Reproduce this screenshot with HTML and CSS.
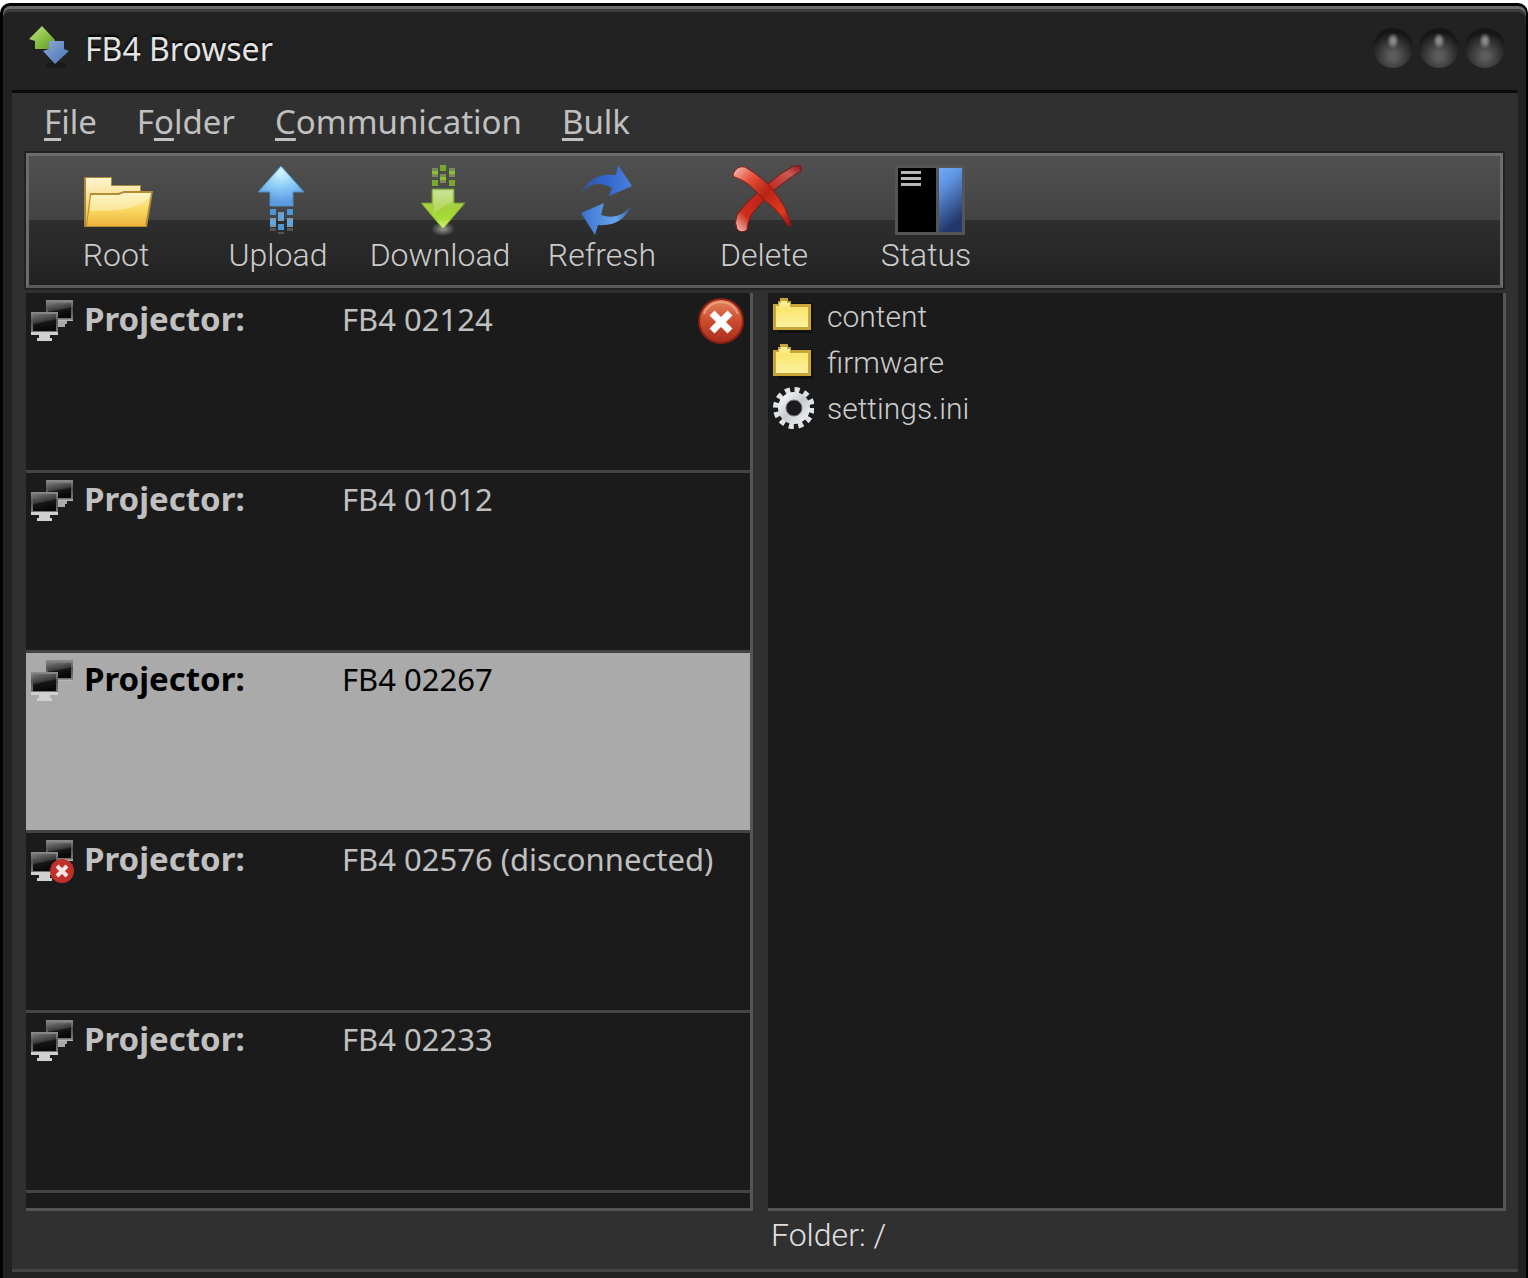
FILE: index.html
```html
<!DOCTYPE html>
<html lang="en">
<head>
    <meta charset="UTF-8">
    <title>FB4 Browser</title>
    <link rel="stylesheet" href="styles.css">
</head>
<body>
    <!-- shared gradients and symbols -->
    <svg class="defs" width="0" height="0" aria-hidden="true">
        <defs>
            <linearGradient id="screen" x1="0" y1="0" x2="0.3" y2="1">
                <stop offset="0" stop-color="#777"/>
                <stop offset="0.5" stop-color="#3c3c3c"/>
                <stop offset="0.6" stop-color="#161616"/>
                <stop offset="1" stop-color="#080808"/>
            </linearGradient>
            <linearGradient id="bezel" x1="0" y1="0" x2="0" y2="1">
                <stop offset="0" stop-color="#8c8c8c"/>
                <stop offset="0.4" stop-color="#555"/>
                <stop offset="0.9" stop-color="#777"/>
                <stop offset="1" stop-color="#ccc"/>
            </linearGradient>
            <linearGradient id="smallFolder" x1="0" y1="0" x2="0" y2="1">
                <stop offset="0" stop-color="#fdf3a8"/>
                <stop offset="0.3" stop-color="#fae56e"/>
                <stop offset="1" stop-color="#fcf3a0"/>
            </linearGradient>
            <linearGradient id="redBall" x1="0" y1="0" x2="0" y2="1">
                <stop offset="0" stop-color="#e58560"/>
                <stop offset="0.5" stop-color="#cc4c2c"/>
                <stop offset="1" stop-color="#a82c1c"/>
            </linearGradient>
        </defs>
        <symbol id="monitors" viewBox="0 0 48 48">
            <rect x="17" y="4" width="27" height="21" fill="url(#bezel)"/>
            <rect x="19" y="7" width="23" height="15" fill="url(#screen)"/>
            <path d="M28 25h10v3h-2v3h-8z" fill="#aaa"/>
            <rect x="2" y="16" width="27" height="23" fill="url(#bezel)"/>
            <rect x="4" y="18" width="23" height="17" fill="url(#screen)"/>
            <path d="M2 36h27v3h-8v3h2v3h-15v-3h2v-3h-8z" fill="#d0d0d0"/>
        </symbol>
        <symbol id="folder" viewBox="0 0 42 46">
            <path d="M6 10h35v30h-35z" fill="#111"/>
            <path d="M1 37v-26h5v-3h2v-3h8v3h3v3h20v26z" fill="#c9a437"/>
            <path d="M4 34v-21h3v-3h2v-2h6v2h3v4h18v20z" fill="url(#smallFolder)"/>
        </symbol>
    </svg>

    <div class="window">
        <header class="title-bar">
            <svg class="app-icon" viewBox="0 0 42 48" aria-hidden="true">
                <defs>
                    <linearGradient id="green" x1="0" y1="0" x2="1" y2="1">
                        <stop offset="0" stop-color="#c6e48c"/>
                        <stop offset="0.5" stop-color="#8cc34a"/>
                        <stop offset="1" stop-color="#5f9a22"/>
                    </linearGradient>
                    <linearGradient id="blue" x1="0" y1="0" x2="1" y2="1">
                        <stop offset="0" stop-color="#8fa9d6"/>
                        <stop offset="1" stop-color="#4672b4"/>
                    </linearGradient>
                </defs>
                <ellipse cx="27" cy="41" rx="10" ry="3" fill="#181818"/>
                <path d="M13 2L26 16V25H6V17L0 15z" fill="url(#green)"/>
                <path d="M20 17H35V25L40 27L26 40L14 27L20 25z" fill="url(#blue)"/>
            </svg>
            <h1 class="title">FB4 Browser</h1>
            <div class="window-buttons">
                <button class="window-button" aria-label="Minimize"></button>
                <button class="window-button" aria-label="Maximize"></button>
                <button class="window-button" aria-label="Close"></button>
            </div>
        </header>

        <div class="content">
            <nav class="menu">
                <button class="menu-item"><u>F</u>ile</button>
                <button class="menu-item">F<u>o</u>lder</button>
                <button class="menu-item"><u>C</u>ommunication</button>
                <button class="menu-item"><u>B</u>ulk</button>
            </nav>

            <div class="toolbar">
                <button class="tool">
                    <svg class="tool-icon" viewBox="0 0 72 72" aria-hidden="true">
                        <defs>
                            <linearGradient id="folderBack" x1="0" y1="0" x2="0" y2="1">
                                <stop offset="0" stop-color="#fff6cf"/>
                                <stop offset="1" stop-color="#f0bb45"/>
                            </linearGradient>
                            <linearGradient id="folderFront" x1="0" y1="0" x2="0" y2="1">
                                <stop offset="0" stop-color="#fff0a8"/>
                                <stop offset="0.5" stop-color="#f9d963"/>
                                <stop offset="1" stop-color="#f0b43c"/>
                            </linearGradient>
                        </defs>
                        <path d="M4 62V12H32V20H61V62z" fill="#a8893c"/>
                        <path d="M6 60V13H31V21H60V60z" fill="url(#folderBack)"/>
                        <path d="M6 62L10 28H38L44 26H73L67 62z" fill="#b38c35"/>
                        <path d="M7 61L11 30H39L44 28H71L65 61z" fill="url(#folderFront)"/>
                        <path d="M11 30H39L44 28H71Q66 47 10 46z" fill="#fff" opacity="0.35"/>
                    </svg>
                    <span class="tool-label">Root</span>
                </button>
                <button class="tool">
                    <svg class="tool-icon" viewBox="0 0 72 72" aria-hidden="true">
                        <defs>
                            <radialGradient id="upFill" cx="0.5" cy="0.15" r="0.75">
                                <stop offset="0" stop-color="#d4f4ff"/>
                                <stop offset="0.5" stop-color="#8ccdf6"/>
                                <stop offset="1" stop-color="#5f9be3"/>
                            </radialGradient>
                        </defs>
                        <path d="M39 1L62 27H51V41H28V27H16z" fill="url(#upFill)" stroke="#4d8fc4"/>
                        <path d="M28 44h6v6h-6zM45 44h6v6h-6zM36 59h6v6h-6z" fill="#4a97d8"/>
                        <path d="M28 53h6v9h-6zM45 53h6v9h-6zM36 47h6v9h-6z" fill="#7f99ac"/>
                        <path d="M28 55h6v5h-6zM45 55h6v5h-6zM36 49h6v5h-6z" fill="#5ba7e4"/>
                        <path d="M28 63h6v3h-6zM45 63h6v3h-6zM36 67h6v2h-6z" fill="#555"/>
                    </svg>
                    <span class="tool-label">Upload</span>
                </button>
                <button class="tool">
                    <svg class="tool-icon" viewBox="0 0 72 72" aria-hidden="true">
                        <defs>
                            <linearGradient id="downFill" x1="0" y1="0" x2="0" y2="1">
                                <stop offset="0" stop-color="#c0dc85"/>
                                <stop offset="0.45" stop-color="#a5cf3d"/>
                                <stop offset="0.75" stop-color="#a7dd38"/>
                                <stop offset="1" stop-color="#e2f084"/>
                            </linearGradient>
                            <radialGradient id="downGlow">
                                <stop offset="0" stop-color="#999"/>
                                <stop offset="1" stop-color="#999" stop-opacity="0"/>
                            </radialGradient>
                        </defs>
                        <ellipse cx="39" cy="64" rx="12" ry="7" fill="url(#downGlow)"/>
                        <path d="M28 24H50V38H61L39 64L17 38H28z" fill="url(#downFill)" stroke="#6d9430"/>
                        <path d="M30 26H48V37Q39 41 30 48z" fill="#fff" opacity="0.2"/>
                        <path d="M28 15h6v6h-6zM45 15h6v6h-6zM36 0h6v6h-6z" fill="#78a92b"/>
                        <path d="M28 3h6v9h-6zM45 3h6v9h-6zM36 9h6v9h-6z" fill="#7c8a5c"/>
                        <path d="M28 6h6v3h-6zM45 6h6v3h-6zM36 12h6v3h-6z" fill="#8bc02e"/>
                    </svg>
                    <span class="tool-label">Download</span>
                </button>
                <button class="tool">
                    <svg class="tool-icon" viewBox="0 0 72 72" aria-hidden="true">
                        <defs>
                            <linearGradient id="arrowTop" x1="0" y1="0" x2="1" y2="0">
                                <stop offset="0" stop-color="#345596"/>
                                <stop offset="0.5" stop-color="#3465cf"/>
                                <stop offset="1" stop-color="#4a80dc"/>
                            </linearGradient>
                            <linearGradient id="arrowBottom" x1="0" y1="0" x2="1" y2="0">
                                <stop offset="0" stop-color="#3a70cc"/>
                                <stop offset="0.7" stop-color="#68a5ee"/>
                                <stop offset="1" stop-color="#345aa8"/>
                            </linearGradient>
                        </defs>
                        <path d="M15 28Q25 7 50 10L52 0L66 21L43 31L46 23Q28 13 15 28z" fill="url(#arrowTop)"/>
                        <path d="M65 41Q56 62 32 60L29 70L15 48L38 38L35 50Q53 56 65 41z" fill="url(#arrowBottom)"/>
                    </svg>
                    <span class="tool-label">Refresh</span>
                </button>
                <button class="tool">
                    <svg class="tool-icon" viewBox="0 0 72 72" aria-hidden="true">
                        <defs>
                            <linearGradient id="crossA" x1="0" y1="0" x2="1" y2="1">
                                <stop offset="0" stop-color="#f4c4bc"/>
                                <stop offset="0.25" stop-color="#e8523a"/>
                                <stop offset="0.5" stop-color="#b82416"/>
                                <stop offset="0.8" stop-color="#e03a22"/>
                                <stop offset="1" stop-color="#8c1410"/>
                            </linearGradient>
                            <linearGradient id="crossB" x1="1" y1="0" x2="0" y2="1">
                                <stop offset="0" stop-color="#8c1818"/>
                                <stop offset="0.15" stop-color="#cc5a54"/>
                                <stop offset="0.45" stop-color="#b8201a"/>
                                <stop offset="0.8" stop-color="#d02c1c"/>
                                <stop offset="1" stop-color="#f6cfc8"/>
                            </linearGradient>
                        </defs>
                        <path d="M66 1Q52 8 40 19Q18 36 9 50Q6 58 9 64Q13 69 19 65Q20 52 28 44Q48 20 73 6V1z" fill="url(#crossB)" stroke="#7a1812"/>
                        <path d="M5 9Q9 0 17 2Q33 11 45 25Q59 42 63 60Q60 63 58 58Q50 45 36 35Q21 17 9 13Q4 12 5 9z" fill="url(#crossA)" stroke="#8a1a12"/>
                    </svg>
                    <span class="tool-label">Delete</span>
                </button>
                <button class="tool">
                    <svg class="tool-icon" viewBox="0 0 72 72" aria-hidden="true">
                        <defs>
                            <linearGradient id="statusFill" x1="0" y1="0" x2="0.3" y2="1">
                                <stop offset="0" stop-color="#72aaf8"/>
                                <stop offset="0.3" stop-color="#5f94e0"/>
                                <stop offset="1" stop-color="#22366a"/>
                            </linearGradient>
                        </defs>
                        <path d="M5 0h70v70h-70z" fill="#555"/>
                        <path d="M8 3h38v64h-38z" fill="#000"/>
                        <path d="M49 3h23v64h-23z" fill="url(#statusFill)"/>
                        <path d="M11 6h20v3h-20zM11 12h20v3h-20zM11 18h20v3h-20z" fill="#b8b8b8"/>
                    </svg>
                    <span class="tool-label">Status</span>
                </button>
            </div>

            <main class="panes">
                <ul class="pane projectors">
                    <li>
                        <button class="projector">
                            <svg class="projector-icon" aria-hidden="true"><use href="#monitors"/></svg>
                            <span class="projector-label">Projector:</span>
                            <span class="projector-name">FB4 02124</span>
                            <svg class="projector-error" viewBox="0 0 46 46" aria-hidden="true">
                                <circle cx="23" cy="23" r="22" fill="url(#redBall)" stroke="#8c2015" stroke-width="2"/>
                                <path d="M6 16A18 18 0 0 1 40 16" fill="none" stroke="#eeb08f" stroke-width="2" opacity="0.7"/>
                                <path d="M14 15L32 33M32 15L14 33" stroke="#fff" stroke-width="7"/>
                            </svg>
                        </button>
                    </li>
                    <li>
                        <button class="projector">
                            <svg class="projector-icon" aria-hidden="true"><use href="#monitors"/></svg>
                            <span class="projector-label">Projector:</span>
                            <span class="projector-name">FB4 01012</span>
                        </button>
                    </li>
                    <li>
                        <button class="projector selected">
                            <svg class="projector-icon" aria-hidden="true"><use href="#monitors"/></svg>
                            <span class="projector-label">Projector:</span>
                            <span class="projector-name">FB4 02267</span>
                        </button>
                    </li>
                    <li>
                        <button class="projector">
                            <svg class="projector-icon" viewBox="0 0 48 48" aria-hidden="true">
                                <use href="#monitors" width="48" height="48"/>
                                <circle cx="33" cy="35" r="12" fill="#c0302a"/>
                                <path d="M28 30L38 40M38 30L28 40" stroke="#f4e4e4" stroke-width="4"/>
                            </svg>
                            <span class="projector-label">Projector:</span>
                            <span class="projector-name">FB4 02576 (disconnected)</span>
                        </button>
                    </li>
                    <li>
                        <button class="projector">
                            <svg class="projector-icon" aria-hidden="true"><use href="#monitors"/></svg>
                            <span class="projector-label">Projector:</span>
                            <span class="projector-name">FB4 02233</span>
                        </button>
                    </li>
                </ul>

                <ul class="pane files">
                    <li>
                        <button class="file">
                            <svg class="file-icon" aria-hidden="true"><use href="#folder"/></svg>
                            content
                        </button>
                    </li>
                    <li>
                        <button class="file">
                            <svg class="file-icon" aria-hidden="true"><use href="#folder"/></svg>
                            firmware
                        </button>
                    </li>
                    <li>
                        <button class="file">
                            <svg class="file-icon" viewBox="0 0 42 46" aria-hidden="true">
                                <defs>
                                    <linearGradient id="gear" x1="0" y1="0" x2="1" y2="1">
                                        <stop offset="0" stop-color="#f4f6f8"/>
                                        <stop offset="0.5" stop-color="#c8ccd0"/>
                                        <stop offset="1" stop-color="#eceef0"/>
                                    </linearGradient>
                                </defs>
                                <circle cx="22" cy="23" r="18" fill="none" stroke="#dfe3e6" stroke-width="6" stroke-dasharray="5 4.425"/>
                                <circle cx="22" cy="23" r="12" fill="none" stroke="url(#gear)" stroke-width="8"/>
                                <circle cx="22" cy="23" r="8" fill="none" stroke="#6c7278" stroke-width="1"/>
                            </svg>
                            settings.ini
                        </button>
                    </li>
                </ul>
            </main>

            <footer class="status-bar">Folder: /</footer>
        </div>
    </div>
</body>
</html>
```
FILE: styles.css
```css
* {
    box-sizing: border-box;
}

body {
    margin: 0;
    padding-top: 3px;
    background: #fff;
    font-family: Roboto, "Liberation Sans", sans-serif;
    font-size: 32px;
    color: #c0c0c0;
}

button {
    margin: 0;
    padding: 0;
    border: 0;
    background: none;
    font: inherit;
    color: inherit;
    text-align: left;
    cursor: pointer;
}

ul {
    list-style: none;
    margin: 0;
    padding: 0;
}

.defs {
    position: absolute;
}

.window {
    display: flex;
    flex-direction: column;
    min-height: calc(100vh - 3px);
    padding: 0 8px 6px 9px;
    border: solid #000;
    border-width: 3px 2px 0 3px;
    border-radius: 10px 10px 0 0;
    background: #222;
    box-shadow: inset 0 3px #6c6c6c, inset 0 6px #3c3c3c;
}

.title-bar {
    display: flex;
    align-items: center;
    height: 84px;
    padding: 0 13px 0 17px;
}

.app-icon {
    width: 42px;
    height: 48px;
}

.title {
    flex: 1;
    margin: 0 0 0 14px;
    font: 32px "Noto Sans", "Open Sans", sans-serif;
    color: #e4e4e4;
    text-shadow: 0 -2px 2px #000;
}

.window-buttons {
    display: flex;
    gap: 6px;
}

.window-button {
    width: 40px;
    height: 40px;
    border-radius: 50%;
    background:
        radial-gradient(ellipse 6px 8px at 50% 32%, #888 30%, transparent),
        radial-gradient(circle at 50% 70%, #5c5c5c 10%, #161616 70%);
}

.content {
    display: flex;
    flex: 1;
    flex-direction: column;
    padding: 0 12px 0 14px;
    border-top: 3px solid #0c0c0c;
    border-bottom: 3px solid #444;
    background: #303030;
}

.menu {
    display: flex;
    gap: 40px;
    height: 60px;
    padding: 0 0 4px 18px;
    font: 33px "Noto Sans", "Open Sans", sans-serif;
}

.menu-item u {
    text-decoration-thickness: 3px;
    text-underline-offset: 4px;
    text-decoration-skip-ink: none;
}

.toolbar {
    display: flex;
    height: 135px;
    margin-right: 3px;
    padding: 9px 0 0 6px;
    border: 3px solid #6c6c6c;
    border-bottom-color: #5a5a5a;
    background: linear-gradient(#505050, #434343 50%, #2e2e2e 50%, #222);
    box-shadow: 0 0 0 2px #222;
}

.tool {
    display: flex;
    flex-direction: column;
    align-items: center;
    width: 162px;
}

.tool-icon {
    width: 72px;
    height: 72px;
    overflow: visible;
}

.tool-label {
    line-height: 36px;
    font-weight: 300;
    color: #ccc;
}

.panes {
    display: grid;
    grid-template-columns: 727fr 738fr;
    gap: 15px;
    flex: 1;
    margin-top: 5px;
}

.pane {
    border: solid #555;
    border-width: 0 3px 3px 0;
    background: #1b1b1b;
}

.projector {
    display: flex;
    align-items: flex-start;
    width: 100%;
    height: 180px;
    padding: 3px 6px 0 3px;
    border-bottom: 3px solid #444;
    font-family: "Noto Sans", "Open Sans", sans-serif;
    font-size: 31px;
    line-height: 46px;
}

.projector.selected {
    background: #aaa;
    color: #000;
}

.projector-icon {
    width: 48px;
    height: 48px;
}

.projector-label {
    width: 258px;
    margin-left: 7px;
    font-size: 33px;
    font-weight: bold;
}

.projector-name {
    flex: 1;
    white-space: nowrap;
}

.projector-error {
    width: 46px;
    height: 46px;
    margin-top: 2px;
}

.files {
    font-size: 30px;
    font-weight: 300;
    color: #ccc;
}

.file {
    display: flex;
    align-items: center;
    gap: 13px;
    width: 100%;
    height: 46px;
    padding-left: 4px;
}

.file-icon {
    width: 42px;
    height: 46px;
}

.status-bar {
    height: 58px;
    margin-left: 50%;
    padding-left: 5px;
    line-height: 48px;
    font-weight: 300;
    color: #e0e0e0;
}
```
